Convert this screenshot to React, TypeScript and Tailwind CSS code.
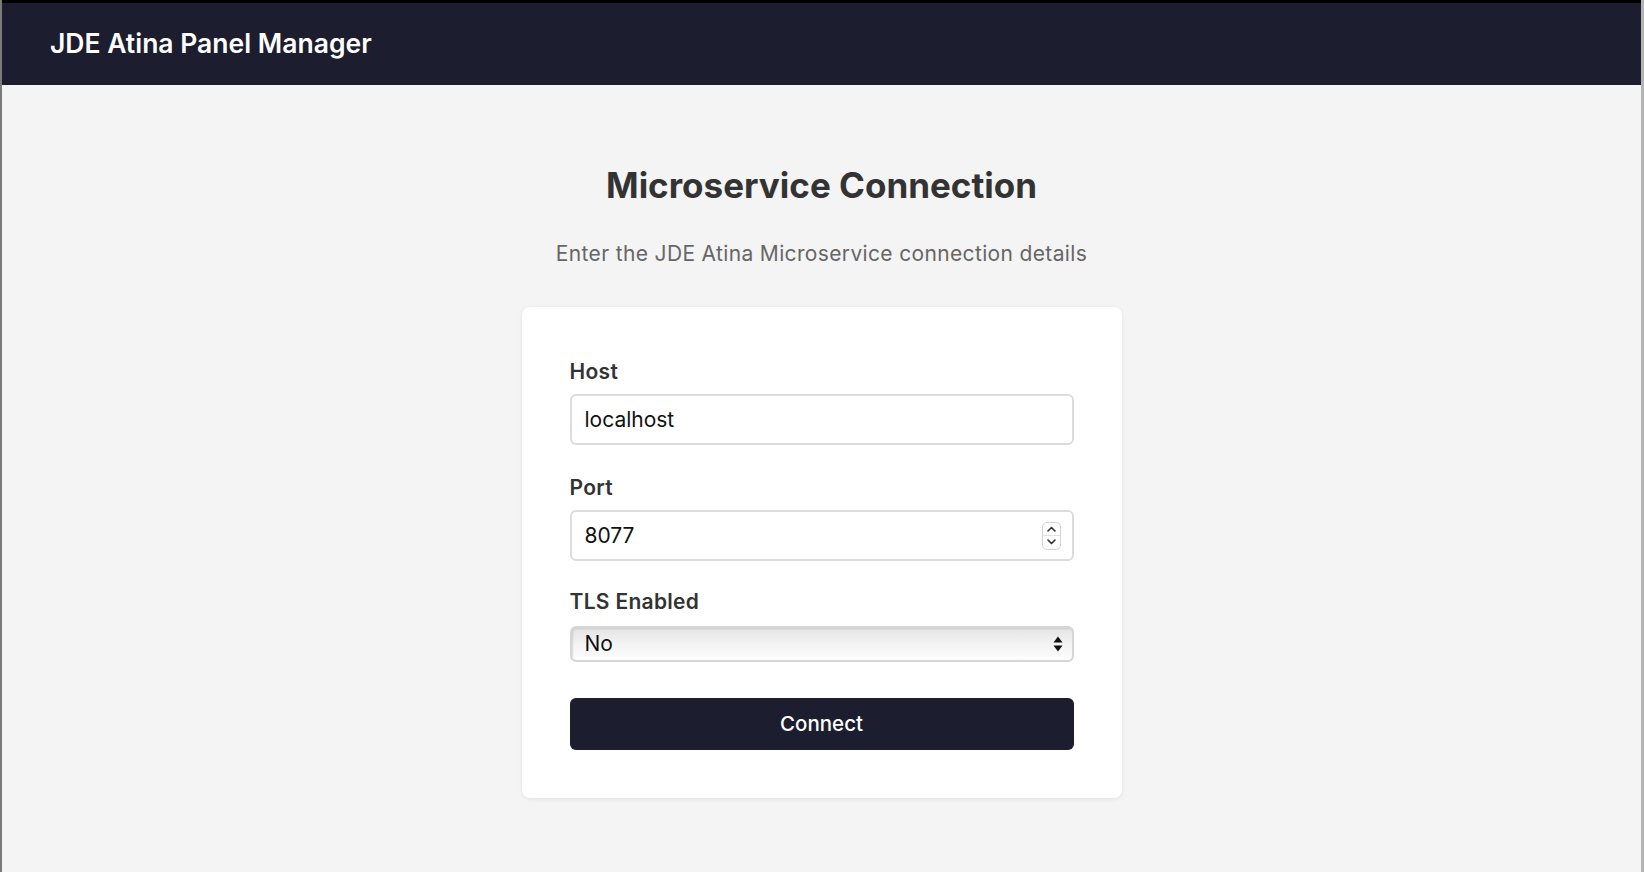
import React from 'react';

const font = { fontFamily: 'Inter, "Noto Sans", sans-serif' };

const Spinner: React.FC = () => (
  <div className="absolute right-[13px] top-1/2 -translate-y-1/2 flex flex-col w-[19px] h-[28px] rounded-[5px] border border-[#d4d4d4] bg-white overflow-hidden">
    <div className="flex-1 flex items-center justify-center border-b border-[#e2e2e2]">
      <svg width="9" height="6" viewBox="0 0 9 6" fill="none">
        <path d="M1 5l3.5-3.5L8 5" stroke="#333" strokeWidth="1.6" strokeLinecap="round" strokeLinejoin="round" />
      </svg>
    </div>
    <div className="flex-1 flex items-center justify-center">
      <svg width="9" height="6" viewBox="0 0 9 6" fill="none">
        <path d="M1 1l3.5 3.5L8 1" stroke="#333" strokeWidth="1.6" strokeLinecap="round" strokeLinejoin="round" />
      </svg>
    </div>
  </div>
);

const App: React.FC = () => {
  return (
    <div
      className="min-h-screen w-full flex flex-col bg-[#f4f4f4] border-l-2 border-l-[#7a7a7a] border-r-[3px] border-r-[#b3b3b3]"
      style={font}
    >
      {/* Header */}
      <header className="h-[85px] flex items-center px-[48px] bg-[#1c1d2e] border-t-[3px] border-t-black">
        <h1 className="text-[26.5px] font-semibold text-white">JDE Atina Panel Manager</h1>
      </header>

      <main className="flex flex-col items-center pt-[78px]">
        <h2 className="text-[35px] leading-[44px] font-bold text-[#333333]">Microservice Connection</h2>
        <p className="mt-[33px] text-[21px] leading-[28px] tracking-[0.35px] text-[#666666]">
          Enter the JDE Atina Microservice connection details
        </p>

        {/* Card */}
        <div className="mt-[39px] w-[600px] bg-white rounded-[8px] shadow-[0_1px_4px_rgba(0,0,0,0.08)] px-[48px] pt-[50px] pb-[48px]">
          <div className="mb-[28px]">
            <label className="block text-[21px] leading-[30px] tracking-[0.3px] font-semibold text-[#333333] mb-[7px]">Host</label>
            <input
              type="text"
              defaultValue="localhost"
              className="w-full h-[51px] px-[13px] rounded-[6px] border-2 border-[#dcdcdc] bg-white text-[21px] text-[#111111] outline-none"
              style={font}
            />
          </div>

          <div className="mb-[26px]">
            <label className="block text-[21px] leading-[30px] tracking-[0.3px] font-semibold text-[#333333] mb-[7px]">Port</label>
            <div className="relative">
              <input
                type="text"
                defaultValue="8077"
                className="w-full h-[51px] px-[13px] rounded-[6px] border-2 border-[#dcdcdc] bg-white text-[21px] text-[#111111] outline-none"
                style={font}
              />
              <Spinner />
            </div>
          </div>

          <div>
            <label className="block text-[21px] leading-[30px] tracking-[0.3px] font-semibold text-[#333333] mb-[9px]">TLS Enabled</label>
            <div className="relative">
              <select
                defaultValue="no"
                className="appearance-none w-full h-[36px] px-[13px] rounded-[6px] border-2 border-[#d6d6d6] bg-linear-to-b from-[#e4e4e4] via-[#f3f3f3] to-[#fdfdfd] shadow-[inset_1px_1px_2px_rgba(0,0,0,0.12)] text-[21px] text-[#111111] outline-none"
                style={font}
              >
                <option value="no">No</option>
                <option value="yes">Yes</option>
              </select>
              <svg
                className="absolute right-[11px] top-1/2 -translate-y-1/2 pointer-events-none"
                width="10"
                height="17"
                viewBox="0 0 10 17"
              >
                <path d="M5 1L9.5 7H0.5Z" fill="#111" />
                <path d="M5 16L9.5 10H0.5Z" fill="#111" />
              </svg>
            </div>
          </div>

          <button className="mt-[36px] w-full h-[52px] rounded-[6px] bg-[#1c1d2e] text-white text-[20.5px] font-medium">
            Connect
          </button>
        </div>
      </main>
    </div>
  );
};

export default App;
